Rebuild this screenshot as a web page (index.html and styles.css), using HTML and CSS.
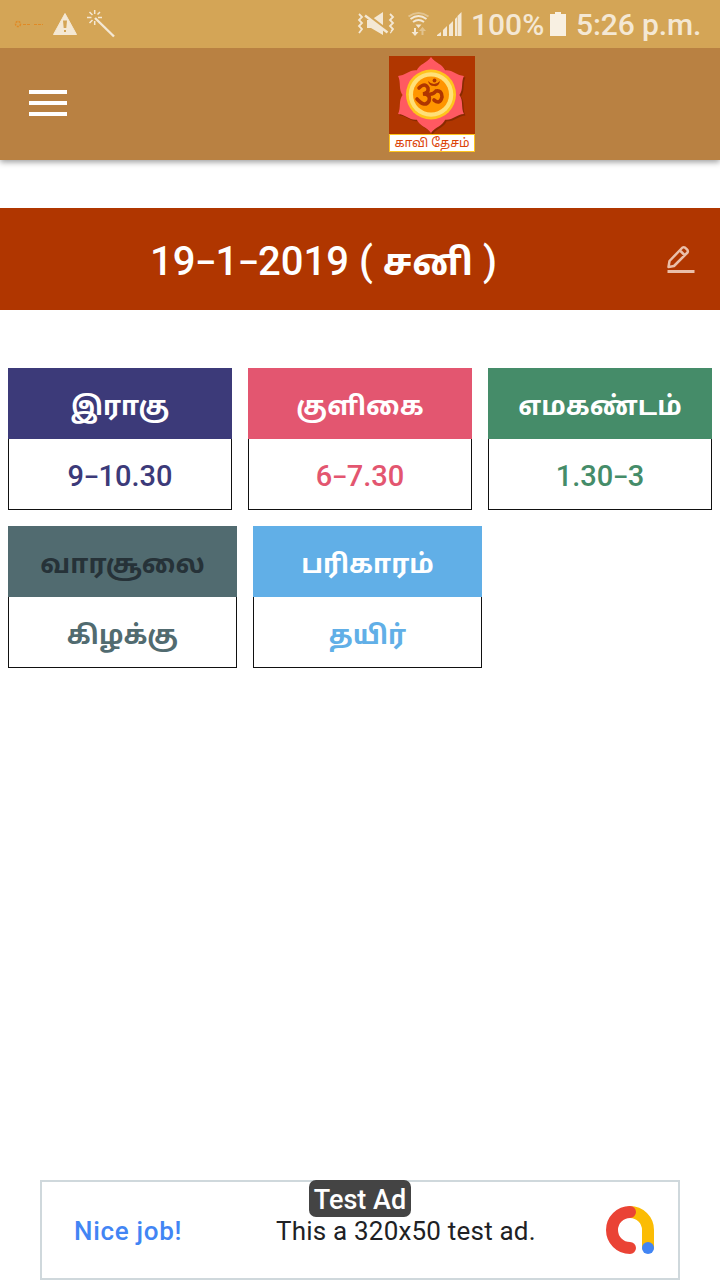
FILE: index.html
```html
<!DOCTYPE html>
<html lang="ta">
<head>
<meta charset="utf-8">
<title>காவி தேசம்</title>
<link rel="stylesheet" href="styles.css">
</head>
<body>
<div class="screen">
  <div class="status">
    <svg class="status-left" width="130" height="48" viewBox="0 0 130 48">
      <g stroke="#e08a25" fill="none"><circle cx="18" cy="24" r="2.500" stroke-width="1.500" stroke-dasharray="2 1"/><path d="M23 24.500h8M34 24.500h9" stroke-dasharray="3 1"/></g>
      <path d="M65 13.500L76.500 34.500H53.500Z" fill="#f4e8d4" stroke="#f4e8d4" stroke-linejoin="round"/>
      <path d="M63 20.500h4l-.7 7.500h-2.600zM64 30h2v2h-2z" fill="#d4a556"/>
      <path d="M95 18L114 36.500" stroke="#f4e8d4" stroke-width="2.400"/>
      <path d="M94.700 10v4M94.700 21v4M87 17.500h4.500M98 17.500h4M89.500 12l3 3M100 12l-2.500 2.500M89.500 23l3-3" stroke="#f4e8d4" stroke-width="1.500"/>
    </svg>
    <div class="status-right">
      <svg width="112" height="48" viewBox="352 0 112 48">
        <path d="M359 14l3 3-3 3 3 3-3 3 3 3-3 4M390 14l3 3-3 3 3 3-3 3 3 3-3 4" fill="none" stroke="#f4e8d4" stroke-width="1.800"/>
        <path d="M367 20l4 0 12-8v23l-12-7h-4z" fill="#f4e8d4"/>
        <path d="M364 12.500L390 32.500" stroke="#d4a556" stroke-width="3"/><path d="M365 15.500L387.500 32.500" stroke="#f4e8d4" stroke-width="2.400"/>
        <g fill="none" stroke="#f4e8d4" stroke-width="2"><path d="M408.500 16.500q10-7 20 0" opacity=".45"/><path d="M410.500 19q8-6 16 0M413 22q5.500-4 11 0"/></g>
        <path d="M415.500 24.500h6l-3 3.500zM414 28h2v4h2.500l-3.500 4-3.500-4h2.500z" fill="#f4e8d4"/>
        <path d="M421.500 35v-4h-2.500l3.500-4 3.500 4h-2.500v4z" fill="#f4e8d4" opacity=".45"/>
        <path d="M437 36v-1l4-3v4zM443 36v-6l4-4v10zM449 36V25l4-4v15zM455 36V19l2-2v19zM457.500 36V16l4-4v24z" fill="#f4e8d4"/>
      </svg>
      <span class="pct">100%</span>
      <svg width="17" height="48" viewBox="550 0 17 48"><path d="M550 14h5v-2h6v2h5v22h-16z" fill="#f8f0e2"/></svg>
      <span class="time">5:26 p.m.</span>
    </div>
  </div>
  <header class="appbar">
    <svg class="menu" width="38" height="26" viewBox="0 0 38 26"><path d="M0 2h38M0 13h38M0 24h38" stroke="#fff" stroke-width="4"/></svg>
    <div class="brand">
      <svg class="lotus" width="86" height="78" viewBox="0 0 86 78">
        <defs><path id="petal" d="M42 1C46 7 54 8 56.500 15Q57 30 42 39Q27 30 27.500 15C30 8 38 7 42 1Z"/></defs>
        <rect width="86" height="78" fill="#b03600"/>
        <g transform="translate(1.500 1.500)" fill="#792500" opacity=".7"><use href="#petal"/><use href="#petal" transform="rotate(60 42 39)"/><use href="#petal" transform="rotate(120 42 39)"/><use href="#petal" transform="rotate(180 42 39)"/><use href="#petal" transform="rotate(240 42 39)"/><use href="#petal" transform="rotate(300 42 39)"/></g>
        <g fill="#ff5961"><use href="#petal"/><use href="#petal" transform="rotate(60 42 39)"/><use href="#petal" transform="rotate(120 42 39)"/><use href="#petal" transform="rotate(180 42 39)"/><use href="#petal" transform="rotate(240 42 39)"/><use href="#petal" transform="rotate(300 42 39)"/></g>
        <circle cx="42" cy="38.500" r="25" fill="#ffc41c"/><circle cx="42" cy="38.500" r="22.300" fill="#ffe078"/><circle cx="42" cy="38.500" r="18" fill="#ff9500"/>
        <g fill="none" stroke="#b03600" stroke-width="3.600" stroke-linecap="round"><path d="M30 32Q36 26 39 32Q40 37 34 38Q42 38 40 45Q36 52 28 43"/><path d="M39 38Q44 39 47 35Q53 34 53 41Q51 49 45 44"/></g>
        <path d="M39 25q6 6 12 0q-1 6-6 5q-5 0-6-5z" fill="#b03600"/><circle cx="45.500" cy="24.500" r="1.900" fill="#b03600"/>
      </svg>
      <div class="brand-name"><span>காவி தேசம்</span></div>
    </div>
  </header>
  <div class="datebar">
    <span class="date">19<i>–</i>1<i>–</i>2019 ( <b>சனி</b> )</span>
    <svg class="edit" width="30" height="30" viewBox="0 0 30 30"><g fill="none" stroke="#eabfa9" stroke-width="2.500" stroke-linejoin="round"><path d="M2.500 22l1-6L16.500 2.500q2-1 4 1.500 2 1.500 1 3.500L8 21l-5.500 1zM14 5.500l4.500 4.500"/><path d="M1.500 26.500h27" stroke-width="3"/></g></svg>
  </div>
  <main>
    <div class="row three">
      <section class="card indigo"><h2>இராகு</h2><p>9<i>–</i>10.30</p></section>
      <section class="card rose"><h2>குளிகை</h2><p>6<i>–</i>7.30</p></section>
      <section class="card green"><h2>எமகண்டம்</h2><p>1.30<i>–</i>3</p></section>
    </div>
    <div class="row two">
      <section class="card slate"><h2>வாரசூலை</h2><p class="ta">கிழக்கு</p></section>
      <section class="card sky"><h2>பரிகாரம்</h2><p class="ta">தயிர்</p></section>
    </div>
  </main>
  <footer class="ad">
    <span class="nice">Nice job!</span>
    <span class="copy">This a 320x50 test ad.</span>
    <svg class="admob" width="48" height="48" viewBox="0 0 48 48"><g fill="none" stroke-width="12" stroke-linecap="round"><path d="M24 6a18 18 0 0 1 18 18v17" stroke="#fbbc04"/><path d="M24 6a18 18 0 0 0 0 36" stroke="#ea4335"/></g><circle cx="42" cy="42" r="6" fill="#4285f4"/></svg>
    <span class="badge">Test Ad</span>
  </footer>
</div>
</body>
</html>
```
FILE: styles.css
```css
* { box-sizing: border-box; }
body { margin: 0; background: #fff; font-family: Roboto, "Noto Sans Tamil", "Noto Sans", sans-serif; }
svg { display: block; flex: none; }
h2, p { margin: 0; }
i { font-style: normal; font-weight: 700; font-size: .79em; line-height: 0; vertical-align: .06em; }
.screen { width: 720px; height: 1280px; display: flex; flex-direction: column; overflow: hidden; }
.status { height: 48px; background: #d4a556; display: flex; justify-content: space-between; color: #f4e8d4; flex: none; }
.status-right { display: flex; align-items: center; width: 368px; font-size: 30px; font-weight: 500; line-height: 48px; white-space: nowrap; }
.pct { width: 78px; margin-left: 7px; padding-top: 2px; }
.pct + svg { margin-left: 1px; }
.time { margin-left: 9px; padding-top: 2px; letter-spacing: -.1px; }
.appbar { height: 112px; flex: none; background: #b98142; box-shadow: 0 2px 6px rgba(0,0,0,.4); clip-path: inset(0 0 -12px 0); display: flex; align-items: flex-start; padding-left: 29px; }
.menu { margin-top: 42px; }
.brand { width: 86px; margin: 8px 0 0 322px; }
.brand-name { height: 18px; background: #fff; border: 1px solid #ffc41c; color: #dc4408; font-size: 12.3px; line-height: 16px; text-align: center; white-space: nowrap; }
.datebar { height: 102px; flex: none; margin-top: 48px; background: #b03600; color: #fff; display: flex; align-items: center; justify-content: space-between; padding: 0 24px 0 150px; }
.date { font-size: 40px; font-weight: 500; line-height: 60px; padding-top: 6px; white-space: nowrap; }
.date b { font-weight: 700; font-size: 36.5px; line-height: 1; }
.edit { margin-top: 2px; }
main { padding: 58px 8px 0; display: flex; flex-direction: column; gap: 16px; flex: 1; }
.row { display: grid; gap: 16px; }
.three { grid-template-columns: repeat(3, 224px); }
.two { grid-template-columns: repeat(2, 229px); }
.card { height: 142px; display: flex; flex-direction: column; text-align: center; color: var(--tone); }
.card h2 { height: 71px; background: var(--tone); color: #fff; font-size: 26.2px; font-weight: 700; line-height: 77px; white-space: nowrap; }
.card p { height: 71px; border: 1px solid #111; border-top: 0; font-size: 29px; font-weight: 500; line-height: 75px; white-space: nowrap; }
.card p.ta { font-size: 26.2px; font-weight: 700; line-height: 77px; }
.indigo { --tone: #3c3a79; }
.rose { --tone: #e35670; }
.green { --tone: #458c69; }
.slate { --tone: #516b70; }
.slate h2 { color: #263238; }
.sky { --tone: #61afe7; }
.ad { position: relative; height: 100px; width: 640px; margin: 0 auto; flex: none; border: 2px solid #cfd8dc; display: flex; align-items: center; padding: 0 24px 0 32px; font-size: 26px; }
.nice { width: 202px; color: #4285f4; font-weight: 500; letter-spacing: .7px; padding-top: 2px; }
.copy { flex: 1; color: #202124; white-space: nowrap; letter-spacing: .2px; padding-top: 2px; }
.badge { position: absolute; left: 267px; top: -2px; width: 102px; height: 37px; border-radius: 7px; background: #444; color: #fff; font-size: 27px; font-weight: 500; line-height: 40px; text-align: center; white-space: nowrap; }
```
